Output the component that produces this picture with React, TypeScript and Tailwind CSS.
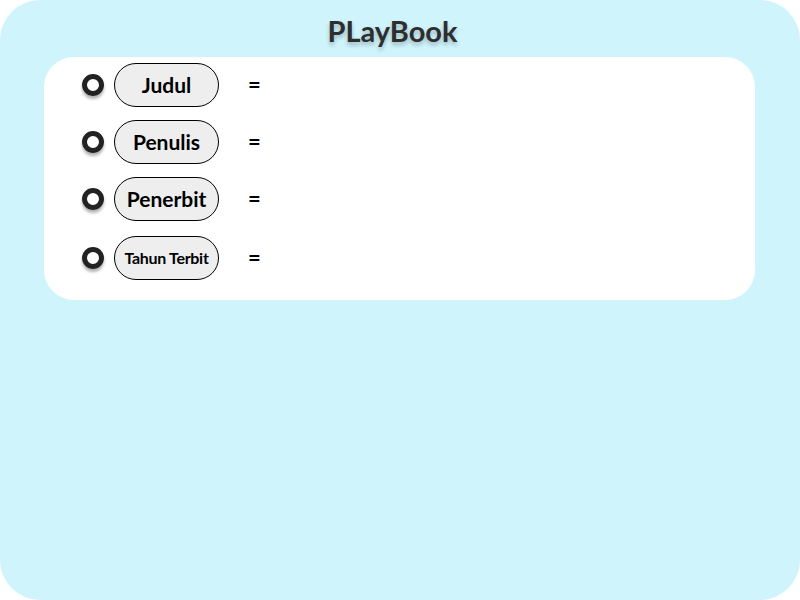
import React from 'react';

const fields = [
  { label: 'Judul', size: 'text-[21px]', gap: '' },
  { label: 'Penulis', size: 'text-[21px]', gap: '' },
  { label: 'Penerbit', size: 'text-[21px]', gap: '' },
  { label: 'Tahun Terbit', size: 'text-[16px] tracking-[-0.3px]', gap: 'mt-[2px]' },
];

const App: React.FC = () => {
  return (
    <div className="w-[800px] h-[600px] bg-white font-['Lato',sans-serif]">
      <div className="w-full h-full bg-[#cff4fc] rounded-[40px] flex flex-col">
        <h1 className="self-center mt-[11px] h-[40px] text-[29px] font-bold text-[#2e2e2e] leading-[40px] [text-shadow:0_3px_4px_rgba(0,0,0,0.25)] ml-[-15px]">
          PLayBook
        </h1>
        <div className="ml-[44px] mt-[6px] w-[711px] h-[243px] bg-white rounded-[30px] pl-[38px] pt-[6px] flex flex-col gap-[13px]">
          {fields.map((f) => (
            <div key={f.label} className={`flex items-center h-[44px] ${f.gap}`}>
              <span className="w-[22px] h-[22px] rounded-full border-[5px] border-[#222] shadow-[0_3px_3px_rgba(0,0,0,0.3)]" />
              <span
                className={`ml-[10px] w-[105px] h-[44px] rounded-full border border-black bg-[#eeeeee] flex items-center justify-center font-bold text-black ${f.size}`}
              >
                {f.label}
              </span>
              <span className="ml-[29px] text-[22px] leading-none font-bold text-black">=</span>
            </div>
          ))}
        </div>
      </div>
    </div>
  );
};

export default App;
